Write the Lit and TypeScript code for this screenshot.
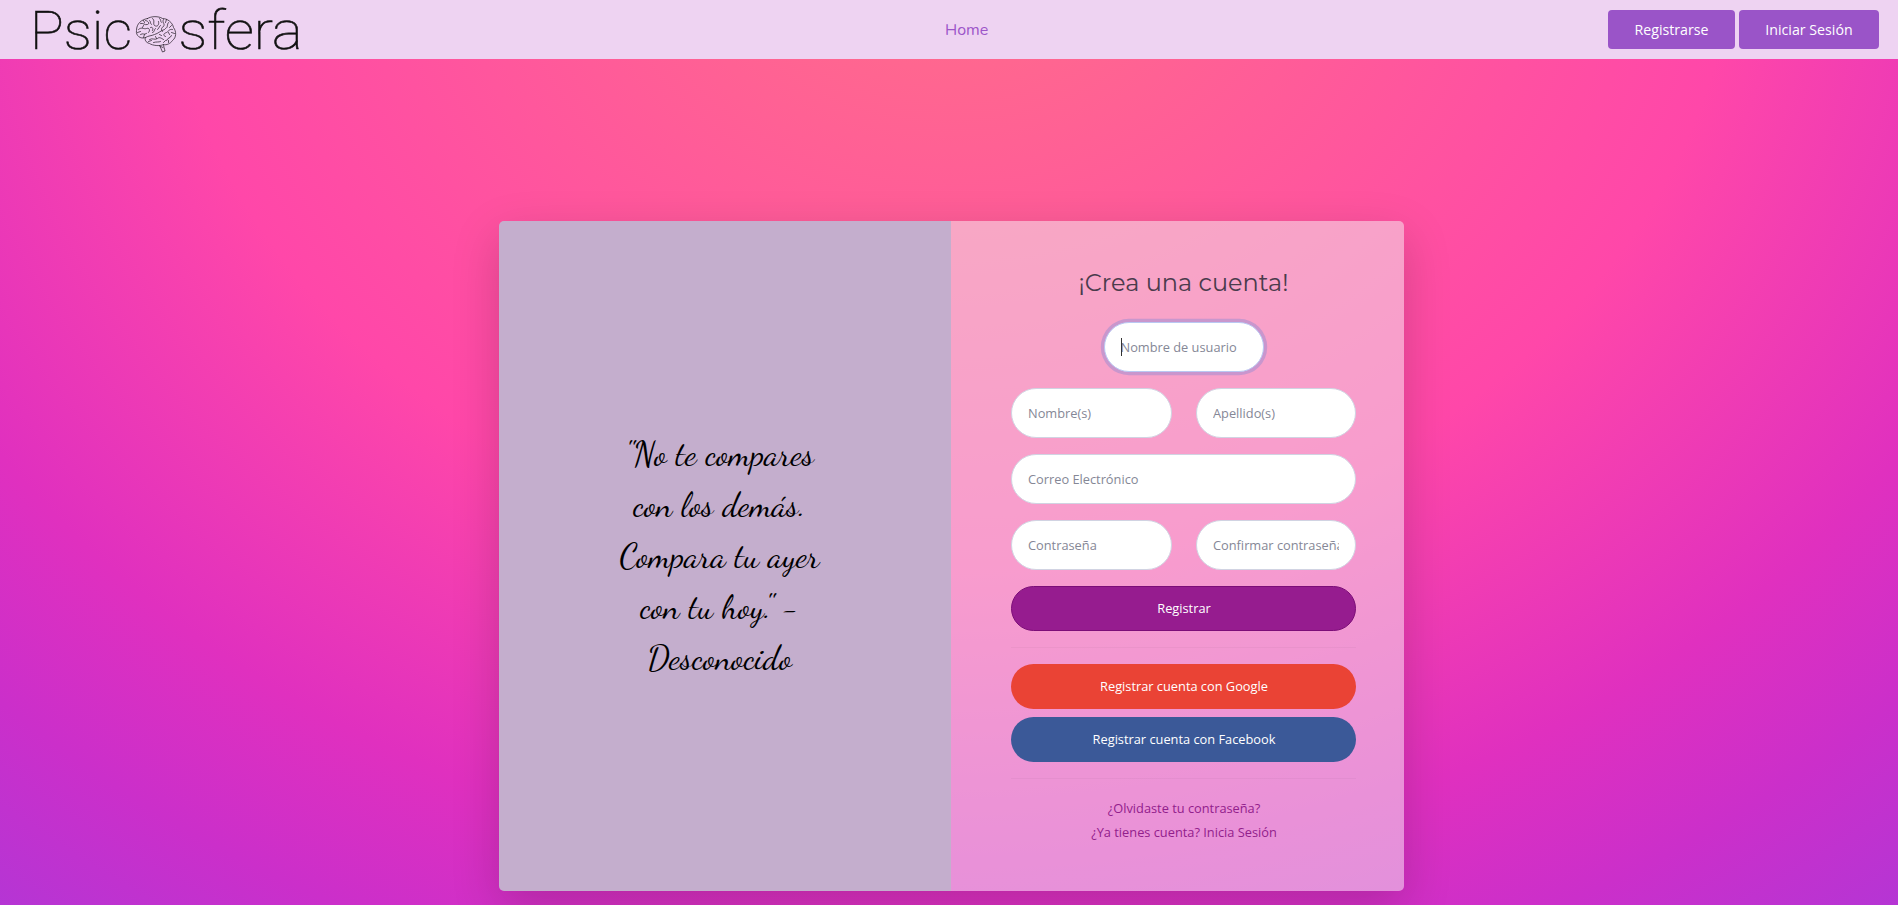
import { LitElement, html, css, svg } from "lit";
import { customElement } from "lit/decorators.js";

const brain = [
  "M12 3C16 .5 23 .5 27 3C32 3 37 7 38 12C41 16 41 22 37 25C35 28 31 30 28 29C24 31 17 30 14 28C10 27 9 24 10 22C5 24 0 20 1 15C1 8 6 4 12 3Z",
  "M24 30C25 32 26 34 27 36.500L29.500 35.500C29 33 28 31 28 29M25 31L27.500 32",
  "M10 22C13 20 16 20.500 19 19C23 18 25 15 29 14",
  "M17 3C20 5 17 8 19 10C22 12 24 9 23 6M24 3C26 4 24.500 6 26 7",
  "M5 8C8 7 9 10 12 9C15 8 12 5 10 5M8 5L9 7M14 5C16 6 14 8 16 9",
  "M3 14C6 11 8 14 11 13C14 12 15 15 13 17M2 17L5 16M8 10L7 12",
  "M5 19C8 17 8 20 11 18M8 22L9 19M15 12C17 11 18 13 17 15",
  "M28 4C26 7 30 8 28 11C26 12 25 14 27 16M31 4L30 7M20 13C18 14 20 16 17 17",
  "M33 7C31 9 33 12 30 13M36 10L34 12M22 14C24 13 23 11 25 10",
  "M37 14C34 13 33 16 31 17C28 18 27 20 30 21M39 18L36 17M34 19L33 17",
  "M14 24C17 22 19 25 22 23C24 21 26 23 28 24M13 26L16 25M20 21L21 23",
  "M18 27C21 26 23 27 25 26M31 25C32 22 35 23 36 20M28 27L30 25M33 27L33 25M24 19L26 20",
];

const quote = ['"No te compares', "con los demás.", "Compara tu ayer", 'con tu hoy." -', "Desconocido"];

@customElement("app-root")
export class AppRoot extends LitElement {
  static styles = css`
    :host { display: flex; flex-direction: column; height: 905px; overflow: hidden;
      font-family: "Open Sans", sans-serif;
      background: radial-gradient(1528px 1269px at 949px -90px, #ff7088 0%, #ff47a9 51.5%, #e030bf 75.5%, #cb2fca 88%, #b535d4 100%); }
    * { box-sizing: border-box; }
    svg { display: block; overflow: visible; }
    .nav { flex: none; height: 59px; background: #eed3f2; display: grid;
      grid-template-columns: 1fr 43px 1fr; align-items: center; padding: 0 19px 0 54px; }
    .logo { width: 310px; height: 59px; margin-left: -54px; }
    .word { font-family: Roboto, sans-serif; font-size: 54px; font-weight: 100; fill: #111; stroke: #111; stroke-width: .6; }
    .brain { fill: none; stroke: #2a222c; stroke-width: .75; stroke-linecap: round; }
    .home { color: #9c55c9; font: 16px Nunito, "Noto Sans", sans-serif; text-decoration: none; white-space: nowrap; }
    .actions { display: flex; justify-content: flex-end; gap: 4px; }
    .nbtn { width: 127px; height: 39px; border: 0; border-radius: 4px; background: #9a54c8; color: #fff;
      font: 14.2px "Open Sans", sans-serif; padding: 0; }
    .wide { width: 140px; }
    .card { flex: none; width: 905px; height: 670px; margin: 162px 0 0 499px; border-radius: 5px;
      display: grid; grid-template-columns: 452px 453px; box-shadow: 0 16px 48px rgba(0,0,0,.175); }
    .quote { background: #c4aecd; border-radius: 5px 0 0 5px; padding: 208px 11px 0 0; text-align: center;
      color: #000; font: 400 34.1px/51px "Dancing Script", "Liberation Serif", serif; }
    .quote span { display: block; }
    .form { background: rgba(242,241,242,.5); border-radius: 0 5px 5px 0; padding: 47px 48px 0 60px;
      display: flex; flex-direction: column; }
    h1 { margin: 0 0 25px; font: 400 24px/29px Montserrat, Lato, sans-serif; color: #4a3b4c; text-align: center; }
    .row { display: grid; grid-template-columns: 161px 160px; gap: 24px; margin-bottom: 16px; }
    .one { grid-template-columns: 345px; }
    .solo { grid-template-columns: 160px; justify-content: center; }
    .field { position: relative; }
    input { display: block; width: 100%; height: 50px; border: 1px solid #d1d3e2; border-radius: 160px;
      padding: 0 16px; font: 12.8px "Open Sans", sans-serif; background: #fff; outline: 0; }
    input::placeholder { color: #858796; opacity: 1; }
    .focused input { border-color: #bac8f3; box-shadow: 0 0 0 3.2px rgba(154,140,210,.5); }
    .caret { position: absolute; left: 17px; top: 16px; width: 1px; height: 18px; background: #333; }
    .btn { flex: none; height: 45px; border: 1px solid transparent; border-radius: 160px; padding: 0 0 2px 1px; color: #fff;
      font: 12.8px "Open Sans", sans-serif; }
    .main { background: #961c8f; border-color: #7c0d78; }
    .google { background: #ea4335; margin-bottom: 8px; }
    .facebook { background: #3b5998; }
    hr { width: 100%; border: 0; border-top: 1px solid rgba(0,0,0,.03); margin: 16px 0; }
    .links { display: flex; flex-direction: column; align-items: center; padding: 1px 0 0 1px; }
    .links a { font-size: 12.8px; line-height: 24px; color: #92208c; text-decoration: none; }
  `;

  private field(label: string, focused = false) {
    return html`<div class="field ${focused ? "focused" : ""}">
      <input placeholder=${label} aria-label=${label} />
      ${focused ? html`<span class="caret"></span>` : null}
    </div>`;
  }

  render() {
    return html`
      <header class="nav">
        <svg class="logo" viewBox="0 0 310 59" width="310" height="59">
          <text class="word" x="30" y="49" textLength="102" lengthAdjust="spacingAndGlyphs">Psic</text>
          <g class="brain" transform="translate(135.500 15.500)">${brain.map((d) => svg`<path d=${d}></path>`)}</g>
          <text class="word" x="178.500" y="49" textLength="124" lengthAdjust="spacingAndGlyphs">sfera</text>
        </svg>
        <a class="home">Home</a>
        <div class="actions">
          <button class="nbtn">Registrarse</button>
          <button class="nbtn wide">Iniciar Sesión</button>
        </div>
      </header>
      <main class="card">
        <section class="quote">${quote.map((t) => html`<span>${t}</span>`)}</section>
        <section class="form">
          <h1>¡Crea una cuenta!</h1>
          <div class="row solo">${this.field("Nombre de usuario", true)}</div>
          <div class="row">${this.field("Nombre(s)")}${this.field("Apellido(s)")}</div>
          <div class="row one">${this.field("Correo Electrónico")}</div>
          <div class="row">${this.field("Contraseña")}${this.field("Confirmar contraseña")}</div>
          <button class="btn main">Registrar</button>
          <hr />
          <button class="btn google">Registrar cuenta con Google</button>
          <button class="btn facebook">Registrar cuenta con Facebook</button>
          <hr />
          <div class="links">
            <a>¿Olvidaste tu contraseña?</a>
            <a>¿Ya tienes cuenta? Inicia Sesión</a>
          </div>
        </section>
      </main>
    `;
  }
}
